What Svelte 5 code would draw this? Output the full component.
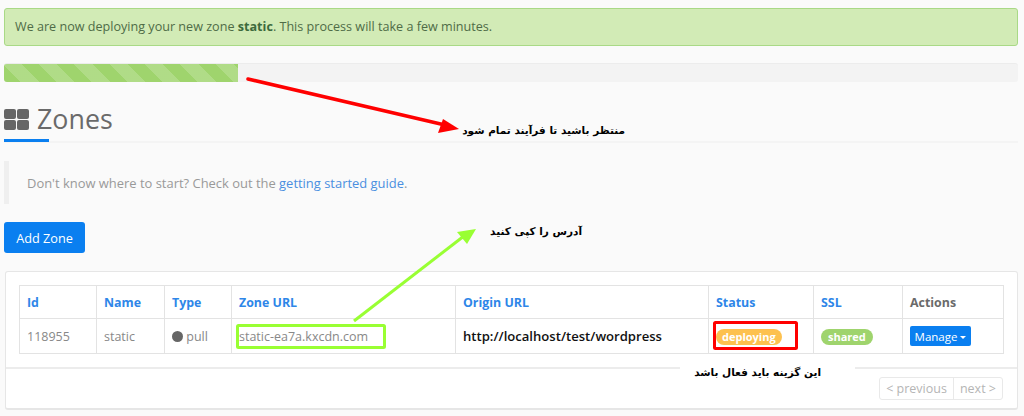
<script lang="ts">
	const columns = [
		{ label: 'Id', width: 77 },
		{ label: 'Name', width: 68 },
		{ label: 'Type', width: 67 },
		{ label: 'Zone URL', width: 224 },
		{ label: 'Origin URL', width: 253 },
		{ label: 'Status', width: 105 },
		{ label: 'SSL', width: 89 },
		{ label: 'Actions', width: 101, plain: true }
	];
</script>

<main>
	<div class="alert">We are now deploying your new zone <strong>static</strong>. This process will take a few minutes.</div>

	<div class="progress"><div class="bar" style="width: {234}px"></div></div>

	<div class="heading">
		<h1>
			<svg class="grid-icon" width="25" height="21" viewBox="0 0 25 21" fill="#666">
				<rect x="0" y="0" width="12" height="10" rx="2" />
				<rect x="13" y="0" width="12" height="10" rx="2" />
				<rect x="0" y="11" width="12" height="10" rx="2" />
				<rect x="13" y="11" width="12" height="10" rx="2" />
			</svg>
			Zones
		</h1>
	</div>

	<div class="callout">Don't know where to start? Check out the <a href="#guide">getting started guide</a>.</div>

	<button class="add">Add Zone</button>

	<section class="panel">
		<div class="table-wrap">
			<table>
				<colgroup>
					{#each columns as col}
						<col style="width: {col.width}px" />
					{/each}
				</colgroup>
				<thead>
					<tr>
						{#each columns as col}
							<th class:plain={col.plain}>{col.label}</th>
						{/each}
					</tr>
				</thead>
				<tbody>
					<tr>
						<td>118955</td>
						<td>static</td>
						<td><span class="dot"></span> pull</td>
						<td>static-ea7a.kxcdn.com</td>
						<td class="origin">http://localhost/test/wordpress</td>
						<td><span class="badge deploying">deploying</span></td>
						<td><span class="badge shared">shared</span></td>
						<td><button class="manage">Manage <span class="caret"></span></button></td>
					</tr>
				</tbody>
			</table>
		</div>
		<div class="panel-footer">
			<div class="pager">
				<span>&lt; previous</span>
				<span>next &gt;</span>
			</div>
		</div>
	</section>

	<!-- annotations drawn over the screenshot -->
	<svg class="marks" width="1024" height="416" viewBox="0 0 1024 416">
		<line x1="248" y1="79" x2="445" y2="125" stroke="#f00" stroke-width="3.5" stroke-linecap="round" />
		<polygon points="443,119 459,129 438,133" fill="#f00" />
		<line x1="354" y1="321" x2="464" y2="236" stroke="#9f3" stroke-width="3" />
		<polygon points="476,229 457,232 467,244" fill="#9f3" />
		<rect x="237.5" y="325.5" width="147" height="22" rx="1" fill="none" stroke="#9f3" stroke-width="3" />
		<rect x="714.5" y="322.5" width="82" height="26" rx="1" fill="none" stroke="#f00" stroke-width="3" />
	</svg>

	<div class="note note-wait" dir="rtl">منتظر باشید تا فرآیند تمام شود</div>
	<div class="note note-copy" dir="rtl">آدرس را کپی کنید</div>
	<div class="note note-active" dir="rtl">این گزینه باید فعال باشد</div>
</main>

<style>
	:global(body) {
		margin: 0;
		background: #fafafa;
	}

	main {
		position: relative;
		width: 1024px;
		height: 416px;
		box-sizing: border-box;
		padding: 8px 6px 0 4px;
		overflow: hidden;
		font-family: 'Open Sans', sans-serif;
		font-size: 13px;
		color: #777;
	}

	.alert {
		height: 38px;
		box-sizing: border-box;
		padding: 0 10px;
		line-height: 36px;
		font-size: 12.6px;
		background: #d2ebb6;
		border: 1px solid #a9d986;
		border-radius: 3px;
		color: #4f6b47;
	}

	.alert strong {
		color: #3c6a3c;
	}

	.progress {
		height: 19px;
		margin-top: 17px;
		background: #f3f3f3;
		border-top: 1px solid #ececec;
		box-sizing: border-box;
		border-radius: 3px;
		overflow: hidden;
	}

	.bar {
		height: 100%;
		background-color: #9fd46d;
		background-image: repeating-linear-gradient(
			45deg,
			transparent 0 12px,
			rgba(255, 255, 255, 0.18) 12px 25px
		);
	}

	.heading {
		height: 61px;
		box-sizing: border-box;
		border-bottom: 2px solid #f4f4f4;
		position: relative;
	}

	.heading::after {
		content: '';
		position: absolute;
		left: 0;
		bottom: -1px;
		width: 45px;
		height: 3px;
		background: #0a7ff0;
	}

	h1 {
		margin: 0;
		padding-top: 19px;
		display: flex;
		align-items: center;
		gap: 8px;
		font-size: 26.8px;
		font-weight: 400;
		line-height: 36px;
		color: #6a6a6a;
	}

	.grid-icon {
		flex: none;
	}

	.callout {
		margin-top: 18px;
		height: 43px;
		box-sizing: border-box;
		border-left: 5px solid #efefef;
		padding-left: 18px;
		line-height: 44px;
		font-size: 12.95px;
		color: #999;
	}

	.callout a {
		color: #4a8fe0;
		text-decoration: none;
	}

	.add {
		display: block;
		margin-top: 18px;
		width: 81px;
		height: 31px;
		padding: 0;
		border: none;
		border-radius: 3px;
		background: #0a7ff0;
		color: #fff;
		font: 12.7px 'Open Sans', sans-serif;
	}

	.panel {
		margin: 18px 0 0 1px;
		height: 139px;
		box-sizing: border-box;
		background: #fff;
		border: 1px solid #e6e6e6;
		border-bottom-width: 2px;
		border-radius: 3px;
	}

	.table-wrap {
		padding: 13px 14px 13px 13px;
		height: 97px;
		box-sizing: border-box;
		border-bottom: 2px solid #ececec;
	}

	table {
		width: 984px;
		table-layout: fixed;
		border-collapse: collapse;
		font-size: 12.5px;
	}

	th,
	td {
		border: 1px solid #e3e3e3;
		padding: 0 7px;
		text-align: left;
		white-space: nowrap;
	}

	th {
		height: 32px;
		color: #2e86e8;
		font-weight: 700;
		font-size: 12.4px;
	}

	th.plain {
		color: #6a6a6a;
	}

	td {
		height: 34px;
		color: #888;
	}

	td.origin {
		font-weight: 600;
		color: #111;
		font-size: 13.1px;
	}

	.dot {
		display: inline-block;
		width: 11px;
		height: 11px;
		border-radius: 50%;
		background: #666;
		vertical-align: -1px;
	}

	.badge {
		display: inline-block;
		height: 16px;
		line-height: 16px;
		padding: 0 7px;
		border-radius: 8px;
		color: #fff;
		font-size: 11px;
		font-weight: 700;
	}

	.deploying {
		background: #fdc14f;
		padding: 0 6px;
	}

	.shared {
		background: #9fd46d;
	}

	.manage {
		height: 20px;
		width: 61px;
		padding: 0;
		border: none;
		border-radius: 2px;
		background: #0a7ff0;
		color: #fff;
		font: 11.5px 'Open Sans', sans-serif;
	}

	.caret {
		display: inline-block;
		border: 3px solid transparent;
		border-top-color: #fff;
		border-bottom: 0;
		vertical-align: 2px;
	}

	.panel-footer {
		display: flex;
		justify-content: flex-end;
		padding: 8px 14px 0 0;
	}

	.pager {
		display: flex;
		height: 23px;
		box-sizing: border-box;
		border: 1px solid #e9e9e9;
		border-radius: 3px;
		color: #b5b5b5;
		line-height: 21px;
		font-size: 12.5px;
	}

	.pager span {
		padding: 0 6px;
	}

	.pager span + span {
		border-left: 1px solid #e9e9e9;
	}

	.marks {
		position: absolute;
		left: 0;
		top: 0;
		pointer-events: none;
	}

	.note {
		position: absolute;
		font-family: 'DejaVu Sans', sans-serif;
		font-size: 10.5px;
		font-weight: 700;
		color: #000;
		white-space: nowrap;
		line-height: 16px;
	}

	.note-wait {
		right: 399px;
		top: 122px;
	}

	.note-copy {
		right: 442px;
		top: 223px;
	}

	.note-active {
		right: 203px;
		top: 364px;
		background: #fff;
		padding: 0 34px 2px 14px;
		margin-right: -34px;
	}
</style>
